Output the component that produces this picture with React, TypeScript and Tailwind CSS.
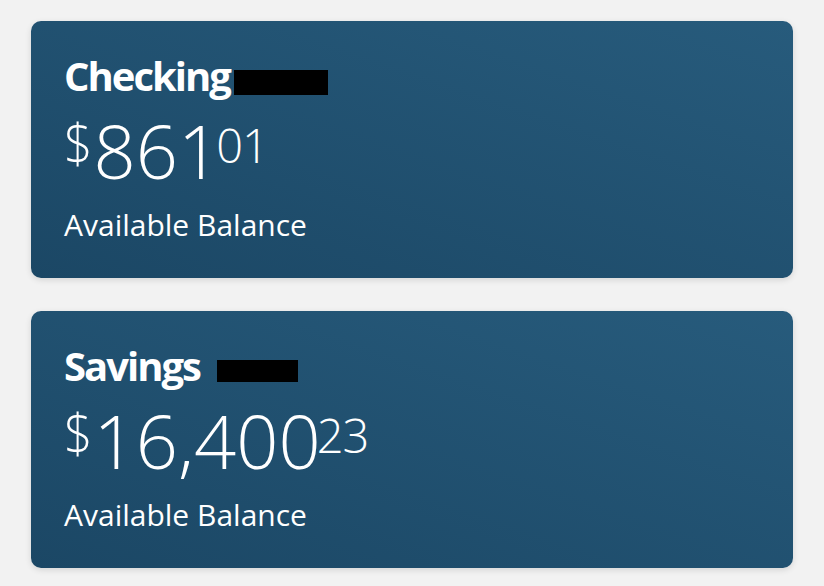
const accounts = [
  { name: 'Checking', dollars: '861', cents: '01', mask: 'w-[94px] h-[25px] ml-[4px]' },
  { name: 'Savings', dollars: '16,400', cents: '23', mask: 'w-[81px] h-[22px] ml-[17px]' },
]

export default function App() {
  return (
    <div className="min-h-screen bg-[#f2f2f2] px-[31px] pt-[21px] flex flex-col gap-[33px] font-['Open_Sans',sans-serif] text-white">
      {accounts.map((a) => (
        <div
          key={a.name}
          className="h-[257px] rounded-[10px] bg-gradient-to-tr from-[#1b4765] to-[#275b7c] shadow-[0_2px_6px_rgba(0,0,0,0.12)] pl-[33px] pt-[35px]"
        >
          <div className="flex items-start">
            <span className="text-[40px] font-bold leading-none tracking-[-2px]">{a.name}</span>
            {/* redacted account number */}
            <span className={`${a.mask} mt-[14px] bg-black`} />
          </div>
          <div className="flex items-start mt-[18px] h-[74px] font-light">
            <span className="text-[50px] leading-none mt-[3px] scale-y-110">$</span>
            <span className="text-[74px] leading-none ml-[1px]">{a.dollars}</span>
            <span className="text-[47px] leading-none mt-[8px] -ml-[4px] tracking-[-1px]">{a.cents}</span>
          </div>
          <div className="mt-[22px] text-[30px] leading-none">Available Balance</div>
        </div>
      ))}
    </div>
  )
}
